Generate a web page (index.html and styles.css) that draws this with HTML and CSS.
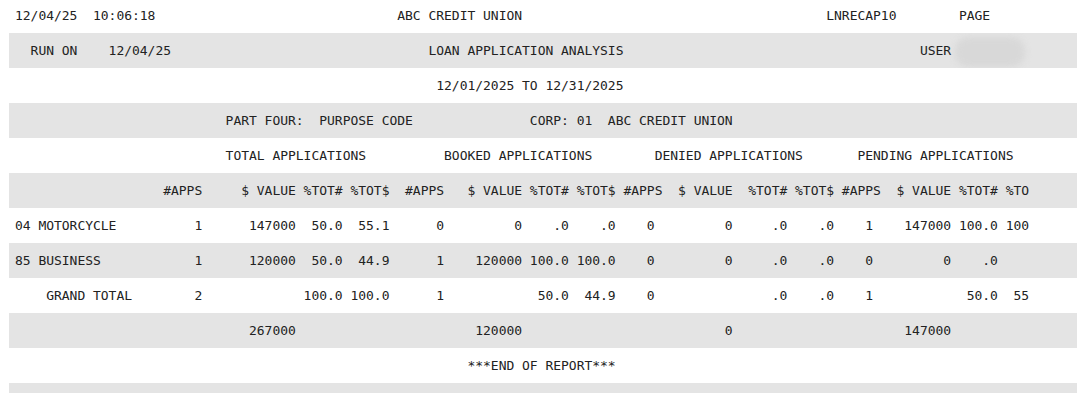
FILE: index.html
```html
<!DOCTYPE html>
<html lang="en">
<head>
    <meta charset="UTF-8">
    <meta name="viewport" content="width=device-width, initial-scale=1.0">
    <title>LNRECAP10 - Loan Application Analysis</title>
    <link rel="stylesheet" href="styles.css">
</head>
<body>
    <div class="report">
        <div class="line">12/04/25  10:06:18                               ABC CREDIT UNION                                       LNRECAP10        PAGE</div>
        <div class="line">  RUN ON    12/04/25                                 LOAN APPLICATION ANALYSIS                                      USER <span class="redact"></span></div>
        <div class="line">                                                      12/01/2025 TO 12/31/2025</div>
        <div class="line">                           PART FOUR:  PURPOSE CODE               CORP: 01  ABC CREDIT UNION</div>
        <div class="line">                           TOTAL APPLICATIONS          BOOKED APPLICATIONS        DENIED APPLICATIONS       PENDING APPLICATIONS</div>
        <div class="line">                   #APPS     $ VALUE %TOT# %TOT$  #APPS   $ VALUE %TOT# %TOT$ #APPS  $ VALUE  %TOT# %TOT$ #APPS  $ VALUE %TOT# %TO</div>
        <div class="line">04 MOTORCYCLE          1      147000  50.0  55.1      0         0    .0    .0    0         0     .0    .0    1    147000 100.0 100</div>
        <div class="line">85 BUSINESS            1      120000  50.0  44.9      1    120000 100.0 100.0    0         0     .0    .0    0         0    .0</div>
        <div class="line">    GRAND TOTAL        2             100.0 100.0      1            50.0  44.9    0               .0    .0    1            50.0  55</div>
        <div class="line">                              267000                       120000                          0                      147000</div>
        <div class="line">                                                          ***END OF REPORT***</div>
        <div class="line"></div>
    </div>
</body>
</html>
```

FILE: styles.css
```css
* {
    margin: 0;
    padding: 0;
    box-sizing: border-box;
}

body {
    font-family: "DejaVu Sans Mono", "Liberation Mono", monospace;
    font-size: 13px;
    letter-spacing: -0.026px;
    color: #222;
    background-color: #fff;
    overflow: hidden;
}

.report {
    margin: -2px 0 0 9px;
}

.line {
    height: 35px;
    line-height: 35px;
    padding-left: 6px;
    white-space: pre;
    overflow: hidden;
}

.line:nth-child(even) {
    background-color: #e4e4e4;
}

/* blurred user id */
.redact {
    display: inline-block;
    width: 70px;
    height: 30px;
    vertical-align: middle;
    margin-left: -4px;
    background-color: #d8d8d8;
    border-radius: 14px;
    filter: blur(3px);
}
```
